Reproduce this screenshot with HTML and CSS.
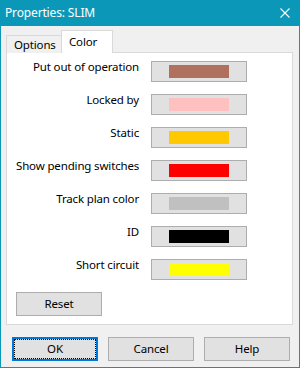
FILE: index.html
```html
<!DOCTYPE html>
<html>
<head>
<meta charset="utf-8">
<link rel="stylesheet" href="styles.css">
</head>
<body>
<div class="window">
  <div class="titlebar">
    <span class="title">Properties: SLIM</span>
    <svg class="close" width="10" height="10" viewBox="0 0 10 10"><path d="M0.5 0.5 L9.5 9.5 M9.5 0.5 L0.5 9.5" stroke="#fff" stroke-width="1.1" fill="none"/></svg>
  </div>
  <div class="client">
    <div class="tabs">
      <div class="tab">Options</div>
      <div class="tab active">Color</div>
    </div>
    <div class="panel">
      <div class="rows">
        <div class="row"><span class="label">Put out of operation</span><button class="swatch"><span class="chip" style="background:#b07060"></span></button></div>
        <div class="row"><span class="label">Locked by</span><button class="swatch"><span class="chip" style="background:#ffc0c0"></span></button></div>
        <div class="row"><span class="label">Static</span><button class="swatch"><span class="chip" style="background:#ffc800"></span></button></div>
        <div class="row"><span class="label">Show pending switches</span><button class="swatch"><span class="chip" style="background:#ff0000"></span></button></div>
        <div class="row"><span class="label">Track plan color</span><button class="swatch"><span class="chip" style="background:#c0c0c0"></span></button></div>
        <div class="row"><span class="label">ID</span><button class="swatch"><span class="chip" style="background:#000000"></span></button></div>
        <div class="row"><span class="label">Short circuit</span><button class="swatch"><span class="chip" style="background:#ffff00"></span></button></div>
      </div>
      <button class="btn reset">Reset</button>
    </div>
    <div class="footer">
      <button class="btn default">OK</button>
      <button class="btn">Cancel</button>
      <button class="btn">Help</button>
    </div>
  </div>
</div>
</body>
</html>
```
FILE: styles.css
```css
html, body {
  margin: 0;
  padding: 0;
  background: #f0f0f0;
}
body {
  width: 300px;
  height: 368px;
  font-family: "Noto Sans", "Open Sans", sans-serif;
  font-size: 11.5px;
  letter-spacing: -0.15px;
  color: #000;
}
.window {
  box-sizing: border-box;
  width: 300px;
  height: 368px;
  border: 1px solid #0b98b8;
  border-top: none;
  display: flex;
  flex-direction: column;
  background: #f0f0f0;
}
.titlebar {
  height: 26px;
  margin: 0 -1px;
  background: #0b98b8;
  display: flex;
  align-items: center;
  padding: 0 10px 0 5px;
  color: #fff;
  font-size: 12px;
}
.title {
  flex: 1;
  line-height: 16px;
}
.close {
  display: block;
}
.client {
  flex: 1;
  display: flex;
  flex-direction: column;
  padding: 4px 6px 0 5px;
}
.tabs {
  display: flex;
  align-items: flex-end;
  height: 23px;
  margin-bottom: -1px;
  position: relative;
  z-index: 1;
}
.tab {
  box-sizing: border-box;
  height: 18px;
  padding: 0 7px;
  line-height: 17px;
  border: 1px solid #d9d9d9;
  border-bottom: none;
  background: #f0f0f0;
  width: 56px;
  white-space: nowrap;
}
.tab + .tab {
  margin-left: -1px;
}
.tab.active {
  height: 23px;
  width: 52px;
  background: #fff;
  line-height: 21px;
  padding-left: 7px;
}
.panel {
  box-sizing: border-box;
  height: 273px;
  background: #fff;
  border: 1px solid #d9d9d9;
  padding: 8px 0 8px 9px;
  display: flex;
  flex-direction: column;
  justify-content: space-between;
}
.rows {
  display: flex;
  flex-direction: column;
  gap: 12px;
}
.row {
  display: flex;
  align-items: flex-start;
  gap: 12px;
}
.label {
  width: 123px;
  text-align: right;
  line-height: 16px;
  margin-top: -2px;
  white-space: nowrap;
  direction: rtl;
  unicode-bidi: plaintext;
}
button {
  font-family: inherit;
  font-size: 11.5px;
  letter-spacing: -0.15px;
  color: #000;
  margin: 0;
}
.swatch {
  box-sizing: border-box;
  width: 96px;
  height: 21px;
  padding: 3px 0;
  background: #e1e1e1;
  border: 1px solid #adadad;
  display: flex;
  justify-content: center;
}
.chip {
  display: block;
  width: 60px;
  height: 13px;
}
.btn {
  box-sizing: border-box;
  height: 24px;
  width: 86px;
  background: #e1e1e1;
  border: 1px solid #adadad;
  padding: 0;
  line-height: 20px;
  position: relative;
}
.reset {
  align-self: flex-start;
}
.footer {
  display: flex;
  gap: 10px;
  padding: 12px 0 0 6px;
}
.default {
  border: 2px solid #0078d7;
}
.default::after {
  content: "";
  position: absolute;
  inset: 0;
  border: 1px dotted #000;
}
```
